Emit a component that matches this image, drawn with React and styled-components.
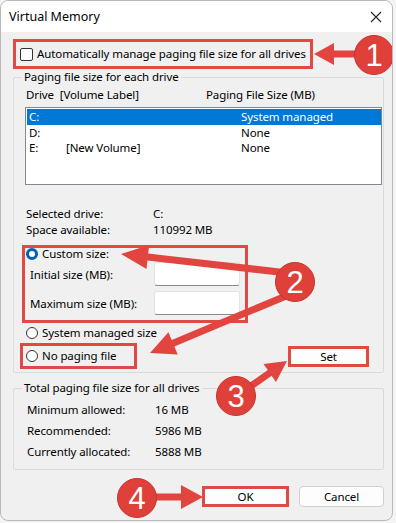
import React from "react";
import styled, { createGlobalStyle } from "styled-components";

const red = "#e04a45";
const arrowRed = "#e2453f";

const GlobalStyle = createGlobalStyle`
    html, body {
        margin: 0;
        padding: 0;
        background: #f4f4f4;
    }
    body {
        font-family: "Noto Sans", "Open Sans", sans-serif;
        font-size: 11.5px;
        letter-spacing: -0.1px;
        color: #000;
    }
`;

const Window = styled.div`
    position: relative;
    width: 391px;
    height: 519px;
    border: 1px solid #b9b9b9;
    border-radius: 8px;
    overflow: hidden;
    background: #f0f0f0;
    display: flex;
    flex-direction: column;
`;

const TitleBar = styled.div`
    height: 31px;
    flex: none;
    background: #fff;
    display: flex;
    align-items: center;
    justify-content: space-between;
    padding: 0 10px 0 8px;
    font-size: 12.5px;
    letter-spacing: 0;
`;

const Body = styled.div`
    flex: 1;
    display: flex;
    flex-direction: column;
    padding: 7px 8px 0 12px;
`;

const Callout = styled.div`
    border: 3px solid ${red};
    box-sizing: border-box;
    width: ${(p) => p.$w}px;
    height: ${(p) => (p.$h ? `${p.$h}px` : "auto")};
    margin-left: ${(p) => p.$ml || 0}px;
    display: flex;
    flex-direction: column;
    justify-content: center;
    flex: none;
`;

const CheckRow = styled.label`
    display: flex;
    align-items: center;
    gap: 4px;
    padding-left: 4px;
    line-height: 14px;
    white-space: nowrap;
`;

const Checkbox = styled.span`
    width: 11px;
    height: 11px;
    flex: none;
    border: 1px solid #333;
    border-radius: 2px;
    background: #fff;
`;

const Group = styled.fieldset`
    margin: ${(p) => p.$mt || 0}px 0 0 0;
    padding: 0 0 ${(p) => p.$pb || 0}px 0;
    border: 1px solid #dadada;
    border-radius: 2px;
    min-width: 0;
`;

const Legend = styled.legend`
    margin-left: 8px;
    padding: 0 2px;
    line-height: 16px;
`;

const HeaderRow = styled.div`
    display: grid;
    grid-template-columns: 180px 1fr;
    padding-left: 12px;
    margin-top: 3px;
    line-height: 14px;
`;

const ListBox = styled.div`
    margin: 5px 1px 0 11px;
    height: 75px;
    border: 1px solid #828790;
    background: #fff;
    padding-top: 1px;
`;

const DriveRow = styled.div`
    display: grid;
    grid-template-columns: 37px 175px 1fr;
    height: 15.5px;
    line-height: 15px;
    margin-left: 1px;
    padding-left: 2px;
    background: ${(p) => (p.$selected ? "#0078d7" : "transparent")};
    color: ${(p) => (p.$selected ? "#fff" : "#000")};
`;

const InfoGrid = styled.div`
    display: grid;
    grid-template-columns: ${(p) => p.$label}px 1fr;
    grid-auto-rows: ${(p) => p.$row}px;
    align-items: center;
    margin-top: ${(p) => p.$mt}px;
    padding-left: ${(p) => p.$pl}px;
`;

const RadioRow = styled.label`
    display: flex;
    align-items: center;
    gap: 4px;
    height: 12px;
    line-height: 12px;
    white-space: nowrap;
    padding-left: ${(p) => p.$pl || 0}px;
`;

const Radio = styled.span`
    width: 12px;
    height: 12px;
    box-sizing: border-box;
    border-radius: 50%;
    flex: none;
    border: ${(p) => (p.$checked ? "3.5px solid #005fb8" : "1px solid #333")};
    background: #fff;
`;

const CustomBox = styled(Callout)`
    justify-content: flex-start;
    margin-top: 8px;
`;

const FieldRow = styled.div`
    display: grid;
    grid-template-columns: 124px 86px;
    align-items: center;
    height: 24px;
    padding-left: 5px;
    margin-top: ${(p) => p.$mt}px;
`;

const TextInput = styled.div`
    height: 24px;
    box-sizing: border-box;
    background: #fff;
    border: 1px solid #e3e3e3;
    border-bottom: 1px solid #8a8a8a;
    border-radius: 3px;
`;

const SystemRow = styled(RadioRow)`
    margin-top: 4px;
`;

const ActionRow = styled.div`
    display: flex;
    align-items: center;
    justify-content: space-between;
    margin-top: 4px;
    padding-right: 14px;
`;

const Button = styled.div`
    background: #fdfdfd;
    display: flex;
    align-items: center;
    justify-content: center;
    height: 100%;
    box-sizing: border-box;
    border: ${(p) => (p.$plain ? "1px solid #d0d0d0" : "none")};
    border-radius: ${(p) => (p.$plain ? "4px" : "0")};
    width: ${(p) => (p.$w ? `${p.$w}px` : "auto")};
`;

const Footer = styled.div`
    display: flex;
    justify-content: flex-end;
    align-items: center;
    gap: 10px;
    margin-top: 16px;
    height: 21px;
`;

const Overlay = styled.svg`
    position: absolute;
    left: -1px;
    top: -1px;
    pointer-events: none;
`;

function arrowPoints([x1, y1], [x2, y2], w, L, h) {
    const len = Math.hypot(x2 - x1, y2 - y1);
    const ux = (x2 - x1) / len;
    const uy = (y2 - y1) / len;
    const nx = -uy;
    const ny = ux;
    const bx = x2 - ux * L;
    const by = y2 - uy * L;
    const pts = [
        [x1 + (nx * w) / 2, y1 + (ny * w) / 2],
        [bx + (nx * w) / 2, by + (ny * w) / 2],
        [bx + nx * h, by + ny * h],
        [x2, y2],
        [bx - nx * h, by - ny * h],
        [bx - (nx * w) / 2, by - (ny * w) / 2],
        [x1 - (nx * w) / 2, y1 - (ny * w) / 2],
    ];
    return pts.map((p) => p.map((v) => v.toFixed(1)).join(",")).join(" ");
}

const arrows = [
    [[362, 54], [314, 54], 7, 20, 11],
    [[288, 273], [121, 254], 7, 27, 12],
    [[286, 296], [150, 353], 7, 25, 12],
    [[238, 395], [287, 361], 7, 21, 11],
    [[150, 497], [203, 497], 7, 22, 12],
];

const badges = [
    { n: 1, x: 374, y: 55 },
    { n: 2, x: 295, y: 282 },
    { n: 3, x: 236, y: 396 },
    { n: 4, x: 137, y: 498 },
];

function Annotations() {
    return (
        <Overlay width="396" height="523" viewBox="0 0 396 523">
            {arrows.map(([a, b, w, L, h], i) => (
                <polygon key={i} points={arrowPoints(a, b, w, L, h)} fill={arrowRed} />
            ))}
            {badges.map((b) => (
                <g key={b.n}>
                    <circle cx={b.x} cy={b.y} r="19.5" fill="#e0403a" stroke="#c53430" strokeWidth="1" />
                    <text
                        x={b.x}
                        y={b.y + 11}
                        textAnchor="middle"
                        fontFamily="Liberation Sans, Arial, sans-serif"
                        fontSize="31"
                        fill="#fff"
                    >
                        {b.n}
                    </text>
                </g>
            ))}
        </Overlay>
    );
}

function CloseIcon() {
    return (
        <svg width="12" height="12" viewBox="0 0 12 12">
            <path d="M1 1 L11 11 M11 1 L1 11" stroke="#222" strokeWidth="1.1" fill="none" />
        </svg>
    );
}

export default function App() {
    return (
        <>
            <GlobalStyle />
            <Window>
                <TitleBar>
                    <span>Virtual Memory</span>
                    <CloseIcon />
                </TitleBar>
                <Body>
                    <Callout $w={300} $h={30}>
                        <CheckRow>
                            <Checkbox />
                            Automatically manage paging file size for all drives
                        </CheckRow>
                    </Callout>

                    <Group $pb={3}>
                        <Legend>Paging file size for each drive</Legend>
                        <HeaderRow>
                            <span>Drive&nbsp;&nbsp;[Volume Label]</span>
                            <span>Paging File Size (MB)</span>
                        </HeaderRow>
                        <ListBox>
                            <DriveRow $selected>
                                <span>C:</span>
                                <span></span>
                                <span>System managed</span>
                            </DriveRow>
                            <DriveRow>
                                <span>D:</span>
                                <span></span>
                                <span>None</span>
                            </DriveRow>
                            <DriveRow>
                                <span>E:</span>
                                <span>[New Volume]</span>
                                <span>None</span>
                            </DriveRow>
                        </ListBox>
                        <InfoGrid $label={127} $row={16} $mt={20} $pl={12}>
                            <span>Selected drive:</span>
                            <span>C:</span>
                            <span>Space available:</span>
                            <span>110992 MB</span>
                        </InfoGrid>

                        <CustomBox $w={226} $h={78} $ml={8}>
                            <RadioRow $pl={1}>
                                <Radio $checked />
                                Custom size:
                            </RadioRow>
                            <FieldRow $mt={2}>
                                <span>Initial size (MB):</span>
                                <TextInput />
                            </FieldRow>
                            <FieldRow $mt={5}>
                                <span>Maximum size (MB):</span>
                                <TextInput />
                            </FieldRow>
                        </CustomBox>

                        <SystemRow $pl={12}>
                            <Radio />
                            System managed size
                        </SystemRow>

                        <ActionRow>
                            <Callout $w={117} $h={26} $ml={6}>
                                <RadioRow $pl={3}>
                                    <Radio />
                                    No paging file
                                </RadioRow>
                            </Callout>
                            <Callout $w={81} $h={21}>
                                <Button>Set</Button>
                            </Callout>
                        </ActionRow>
                    </Group>

                    <Group $mt={7} $pb={7}>
                        <Legend>Total paging file size for all drives</Legend>
                        <InfoGrid $label={128} $row={21} $mt={3} $pl={13}>
                            <span>Minimum allowed:</span>
                            <span>16 MB</span>
                            <span>Recommended:</span>
                            <span>5986 MB</span>
                            <span>Currently allocated:</span>
                            <span>5888 MB</span>
                        </InfoGrid>
                    </Group>

                    <Footer>
                        <Callout $w={87} $h={21}>
                            <Button>OK</Button>
                        </Callout>
                        <Button $plain $w={85}>Cancel</Button>
                    </Footer>
                </Body>
                <Annotations />
            </Window>
        </>
    );
}
